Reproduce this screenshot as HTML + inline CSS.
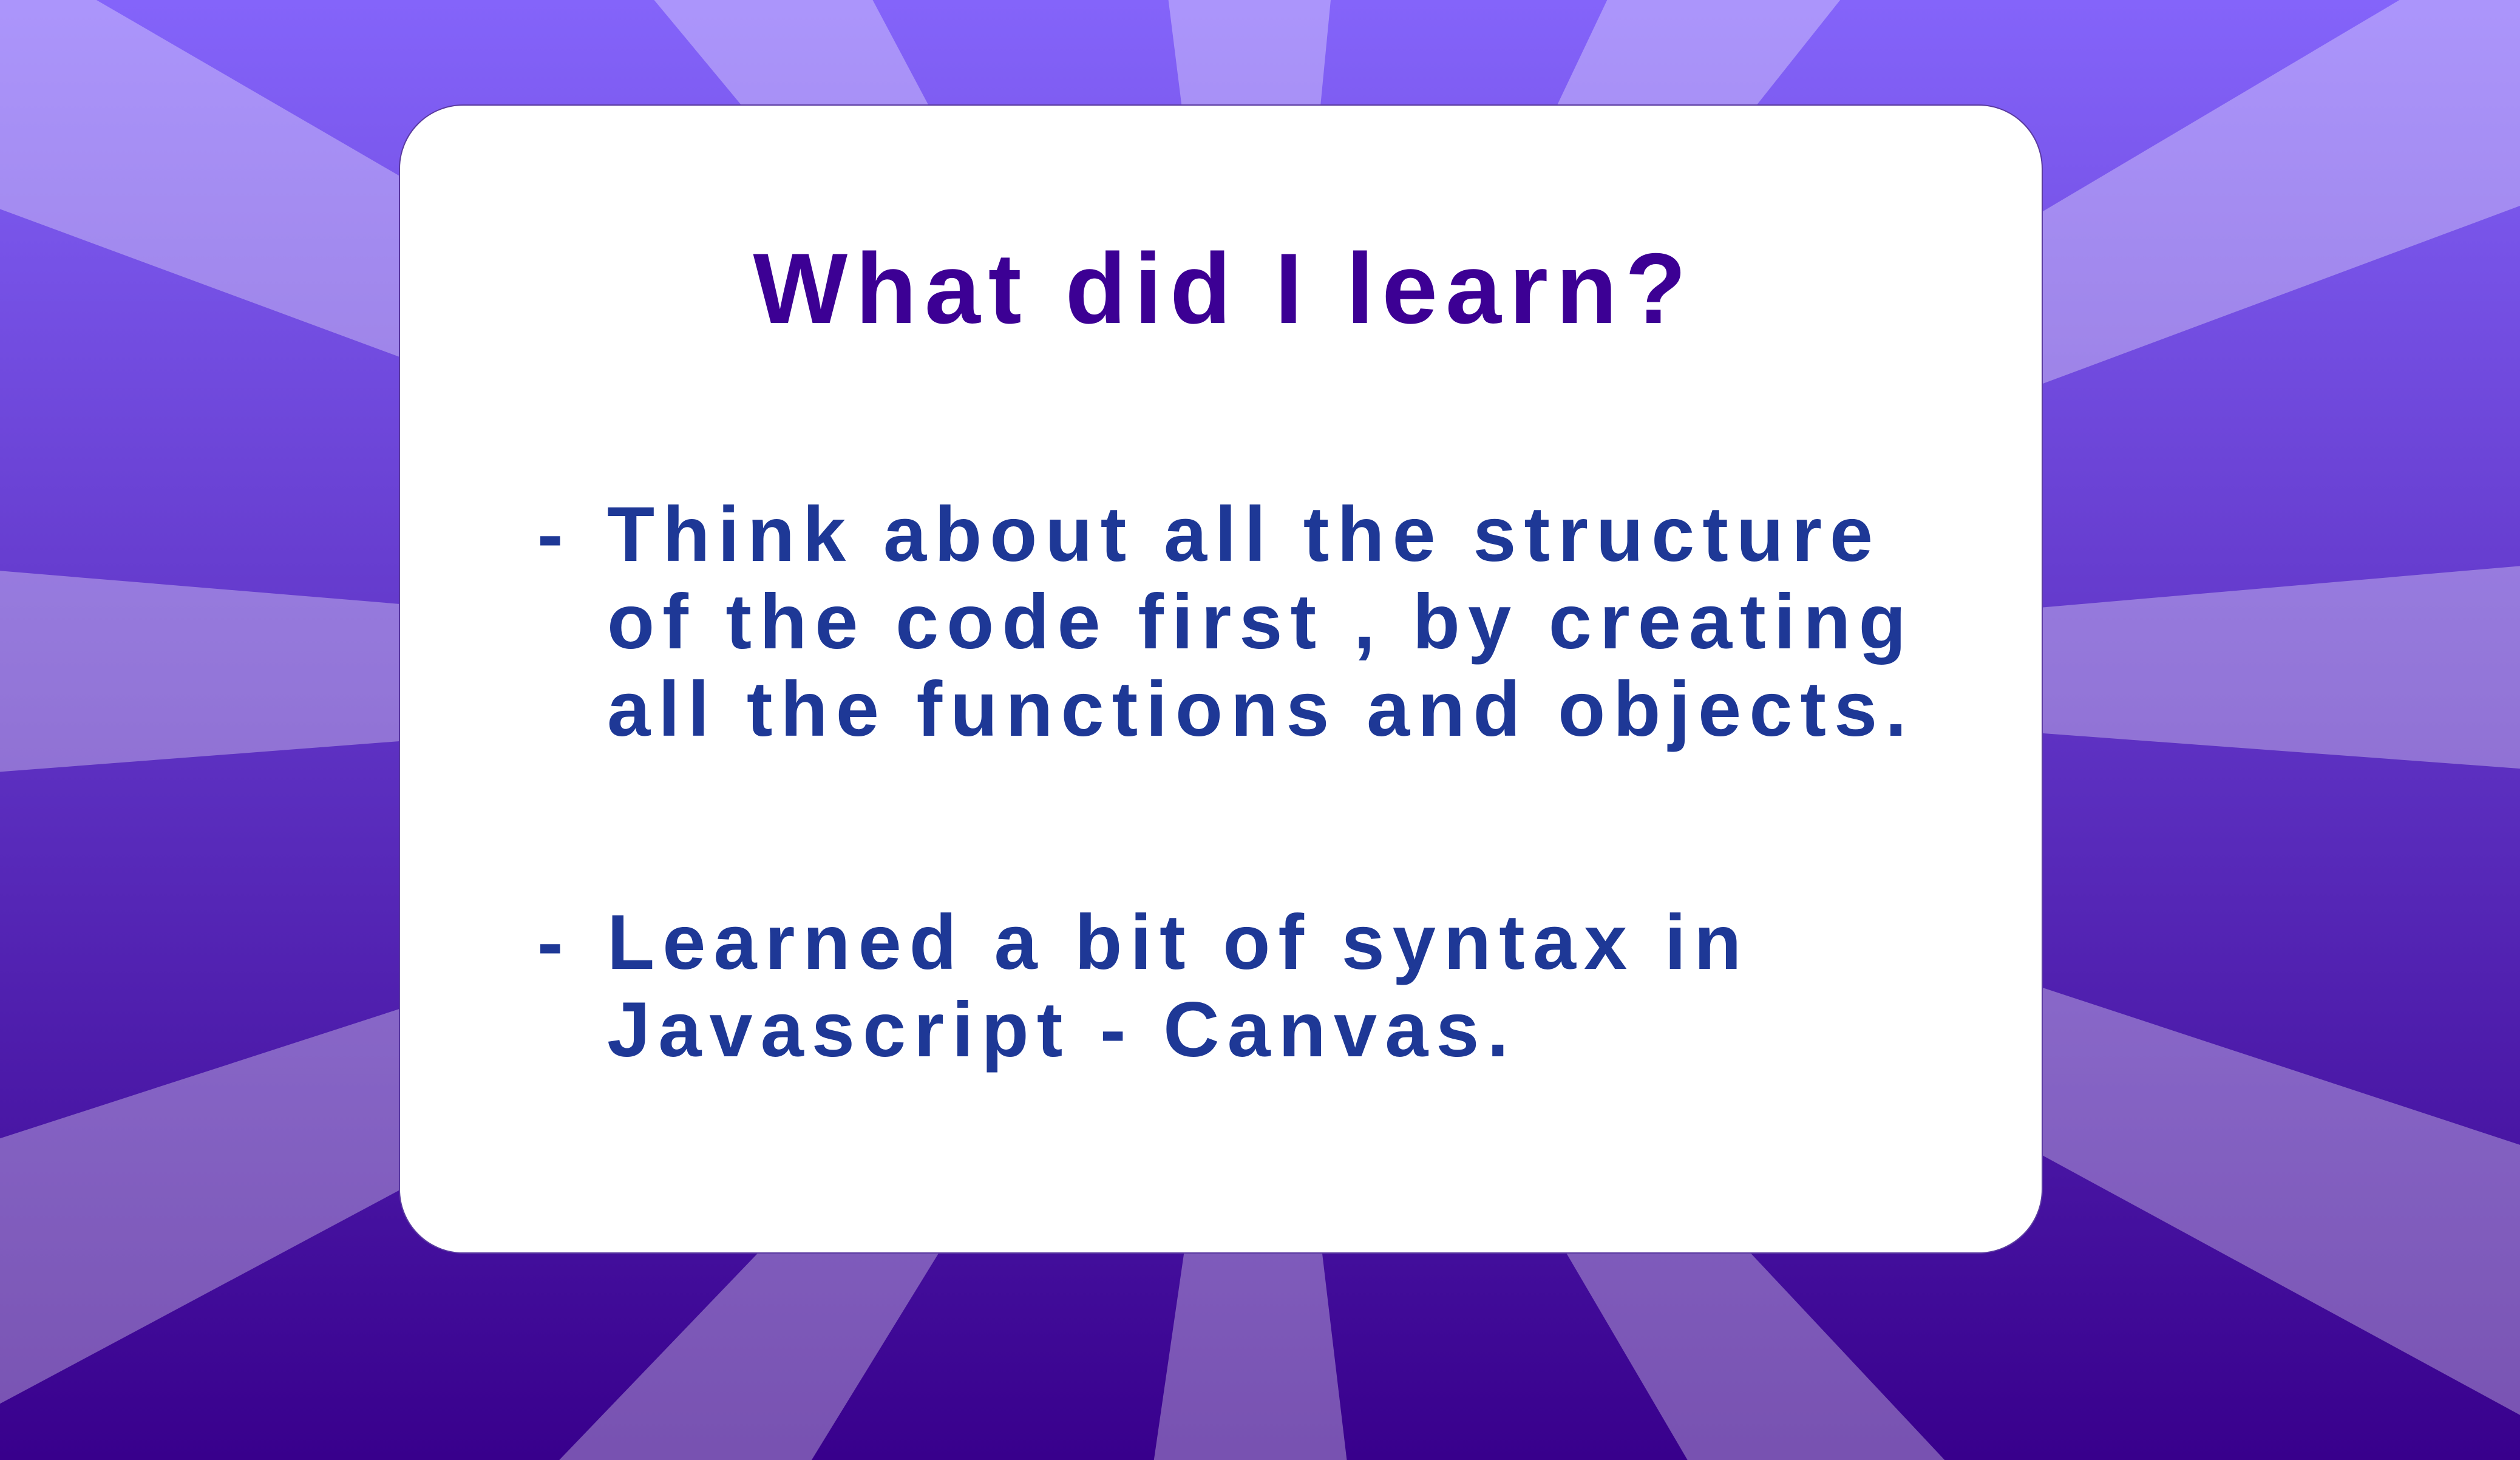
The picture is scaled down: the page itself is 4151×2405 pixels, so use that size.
<!DOCTYPE html>
<html><head><meta charset="utf-8"><style>
html,body{margin:0;padding:0;}
body{width:4151px;height:2405px;position:relative;overflow:hidden;font-family:"Liberation Sans",sans-serif;}
svg.bg{position:absolute;left:0;top:0;}
.card{position:absolute;left:657px;top:172px;width:2708px;height:1893px;background:#fff;border-radius:106px;border:2px solid #5a3aa0;box-sizing:border-box;}
.t{position:absolute;white-space:nowrap;font-weight:bold;}
.title{left:-60px;width:4151px;text-align:center;top:385px;font-size:165px;color:#3c0094;letter-spacing:13px;line-height:180px;}
.b{font-size:128px;color:#1e3896;line-height:144px;letter-spacing:13px;}
</style></head><body>
<svg class="bg" width="4151" height="2405" viewBox="0 0 1568 908" preserveAspectRatio="none">
<defs><linearGradient id="g" x1="0" y1="0" x2="0" y2="1">
<stop offset="0" stop-color="#8464fa"/><stop offset="1" stop-color="#38008c"/></linearGradient></defs>
<rect width="1568" height="908" fill="url(#g)"/>
<g fill="#ffffff" fill-opacity="0.32">
<polygon points="784,420 60,0 0,0 0,130"/>
<polygon points="784,454 407,0 543,0"/>
<polygon points="784,454 727,0 828,0"/>
<polygon points="784,454 1000,0 1145,0"/>
<polygon points="784,420 1493,0 1568,0 1568,128"/>
<polygon points="784,420 0,355 0,480"/>
<polygon points="784,420 1568,352 1568,478"/>
<polygon points="784,454 0,708 0,873"/>
<polygon points="784,454 1568,712 1568,880"/>
<polygon points="784,454 348,908 505,908"/>
<polygon points="784,454 718,908 838,908"/>
<polygon points="784,454 1050,908 1210,908"/>
</g>
</svg>
<div class="card"></div>
<div class="t title">What did I learn?</div>
<div class="t b" style="left:885px;top:809px;">-</div>
<div class="t b" style="left:1000px;top:809px;">Think about all the structure<br>of the code first , by creating<br>all the functions and objects.</div>
<div class="t b" style="left:885px;top:1481px;">-</div>
<div class="t b" style="left:1000px;top:1481px;">Learned a bit of syntax in<br>Javascript - Canvas.</div>
</body></html>
